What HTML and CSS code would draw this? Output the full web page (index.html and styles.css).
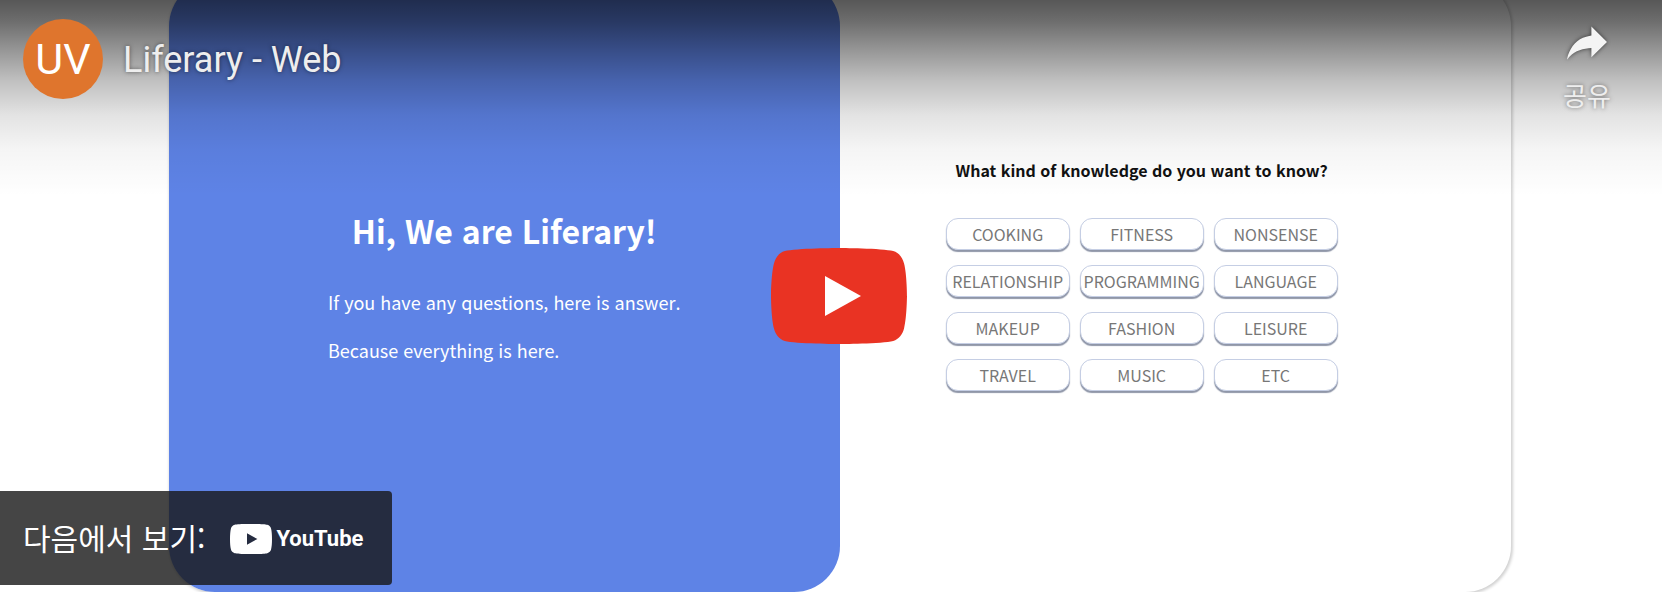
FILE: index.html
```html
<!DOCTYPE html>
<html lang="ko">
<head>
<meta charset="utf-8">
<meta name="viewport" content="width=device-width, initial-scale=1">
<title>Liferary - Web</title>
<link rel="stylesheet" href="styles.css">
</head>
<body>
<main class="player">
  <div class="frame">
    <section class="intro">
      <h1 class="intro-title">Hi, We are Liferary!</h1>
      <div class="intro-text">
        <p>If you have any questions, here is answer.</p>
        <p>Because everything is here.</p>
      </div>
    </section>
    <section class="topics">
      <h2 class="topics-title">What kind of knowledge do you want to know?</h2>
      <div class="topic-grid">
        <button class="topic" type="button">COOKING</button>
        <button class="topic" type="button">FITNESS</button>
        <button class="topic" type="button">NONSENSE</button>
        <button class="topic" type="button">RELATIONSHIP</button>
        <button class="topic" type="button">PROGRAMMING</button>
        <button class="topic" type="button">LANGUAGE</button>
        <button class="topic" type="button">MAKEUP</button>
        <button class="topic" type="button">FASHION</button>
        <button class="topic" type="button">LEISURE</button>
        <button class="topic" type="button">TRAVEL</button>
        <button class="topic" type="button">MUSIC</button>
        <button class="topic" type="button">ETC</button>
      </div>
    </section>
  </div>

  <header class="top-bar">
    <a class="avatar" href="#">UV</a>
    <a class="video-title" href="#">Liferary - Web</a>
    <button class="share" type="button">
      <svg class="share-icon" viewBox="0 0 36 36" aria-hidden="true">
        <path d="m 20.20,14.19 0,-4.45 7.79,7.79 -7.79,7.56 0,-4.56 C 16.27,20.69 12.10,21.81 9.34,24.76 8.80,25.13 7.60,27.29 8.12,25.65 9.08,21.32 11.80,17.18 15.98,15.38 c 1.33,-0.60 2.76,-0.98 4.21,-1.19 z"/>
      </svg>
      <span class="share-label">공유</span>
    </button>
  </header>

  <button class="play" type="button" aria-label="재생">
    <svg class="play-icon" viewBox="0 0 68 48" aria-hidden="true">
      <path fill="#e93323" d="M66.52,7.74c-0.78-2.93-2.49-5.41-5.42-6.19C55.79,.13,34,0,34,0S12.21,.13,6.9,1.55C3.97,2.33,2.27,4.81,1.48,7.74C0.06,13.05,0,24,0,24s0.06,10.95,1.48,16.26c0.78,2.93,2.49,5.41,5.42,6.19C12.21,47.87,34,48,34,48s21.79-0.13,27.1-1.55c2.93-0.78,4.64-3.26,5.42-6.19C67.94,34.95,68,24,68,24S67.94,13.05,66.52,7.74z"/>
      <path fill="#fff" d="M45,24 27,14 27,34z"/>
    </svg>
  </button>

  <a class="watch-on" href="#">
    <span class="watch-label">다음에서 보기:</span>
    <span class="brand">
      <svg class="brand-icon" viewBox="0 0 42 30" aria-hidden="true">
        <path fill="#fff" fill-rule="evenodd" d="M21 0C10 0 7 .3 4.700 .8C2.700 1.300 1.400 2.700 .9 4.700C.3 7.200 0 10.500 0 15s.3 7.800 .9 10.300c.5 2 1.800 3.400 3.800 3.900C7 29.700 10 30 21 30s14-.3 16.300-.8c2-.5 3.300-1.900 3.800-3.900c.6-2.500 .9-5.800 .9-10.300s-.3-7.800-.9-10.300c-.5-2-1.800-3.400-3.800-3.900C35 .3 32 0 21 0zM17 9.300v11.400L27.400 15z"/>
      </svg>
      <span class="brand-name">YouTube</span>
    </span>
  </a>
</main>
</body>
</html>
```
FILE: styles.css
```css
* {
  box-sizing: border-box;
}

body {
  margin: 0;
  background: #fff;
  font-family: "Noto Sans CJK KR", "Noto Sans", sans-serif;
}

button {
  padding: 0;
  border: 0;
  background: none;
  font: inherit;
  cursor: pointer;
}

a {
  color: inherit;
  text-decoration: none;
}

.player {
  position: relative;
  height: 100vh;
  overflow: hidden;
  padding: 0 9.1% 0 10.15%;
}

/* Video frame */
.frame {
  display: grid;
  grid-template-columns: 1fr 1fr;
  height: calc(100% + 20px);
  margin-top: -20px;
  border-radius: 46px;
  background: #fff;
  box-shadow: 1px 1px 3px 1px rgba(0, 0, 0, 0.18);
}

.intro {
  display: flex;
  flex-direction: column;
  align-items: center;
  gap: 32px;
  padding-top: 226px;
  border-radius: 46px;
  background: #5e83e6;
  color: #fff;
}

.intro-title {
  margin: 0;
  font-size: 32px;
  line-height: 48px;
}

.intro-text {
  display: grid;
  gap: 16px;
  font-size: 18px;
  line-height: 32px;
}

.intro-text p {
  margin: 0;
}

.topics {
  display: flex;
  flex-direction: column;
  align-items: center;
  gap: 36px;
  padding: 178px 10% 0 0;
}

.topics-title {
  margin: 0;
  color: #111;
  font-size: 16px;
  line-height: 24px;
}

.topic-grid {
  display: grid;
  grid-template-columns: repeat(3, 124px);
  gap: 15px 10px;
}

.topic {
  height: 32px;
  border: 1px solid #c5cee4;
  border-radius: 12px;
  background: #fff;
  box-shadow: 0 2px 1px #8f96a8;
  color: #777;
  font-size: 16px;
  line-height: 30px;
  white-space: nowrap;
}

/* Player controls */
.top-bar {
  position: absolute;
  inset: 0 0 auto;
  display: flex;
  align-items: flex-start;
  gap: 20px;
  height: 200px;
  padding: 19px 39px 0 23px;
  background: linear-gradient(
    rgba(0, 0, 0, 0.66) 0,
    rgba(0, 0, 0, 0.57) 22px,
    rgba(0, 0, 0, 0.41) 50px,
    rgba(0, 0, 0, 0.25) 80px,
    rgba(0, 0, 0, 0.11) 115px,
    rgba(0, 0, 0, 0.04) 150px,
    transparent 196px
  );
  color: #eee;
  text-shadow: 0 0 4px rgba(0, 0, 0, 0.5);
}

.avatar {
  width: 80px;
  border-radius: 50%;
  background: #df752d;
  color: #fff;
  font: 43px/80px Roboto, sans-serif;
  text-align: center;
  text-shadow: none;
}

.video-title {
  flex: 1;
  font: 36px/82px Roboto, sans-serif;
}

.share {
  display: flex;
  flex-direction: column;
  align-items: center;
  margin-top: -12px;
  color: #eee;
  text-shadow: inherit;
}

.share-icon {
  width: 72px;
  height: 72px;
  fill: #f4f4f4;
  filter: drop-shadow(0 0 2px rgba(0, 0, 0, 0.6));
}

.share-label {
  font-size: 26px;
  line-height: 32px;
}

.play {
  position: absolute;
  top: 50%;
  left: 50.5%;
  transform: translate(-50%, -50%);
}

.play-icon {
  display: block;
  width: 136px;
  height: 96px;
}

.watch-on {
  position: absolute;
  bottom: 7px;
  left: 0;
  display: flex;
  align-items: center;
  gap: 25px;
  height: 94px;
  padding: 0 29px 0 23px;
  border-radius: 0 4px 4px 0;
  background: rgba(23, 23, 23, 0.8);
  color: #fff;
}

.watch-label {
  padding-bottom: 3px;
  font-size: 30px;
}

.brand {
  display: flex;
  align-items: center;
  gap: 4px;
  padding-top: 2px;
}

.brand-icon {
  width: 42px;
  height: 30px;
}

.brand-name {
  font: bold 22px/32px Roboto, sans-serif;
}
```
